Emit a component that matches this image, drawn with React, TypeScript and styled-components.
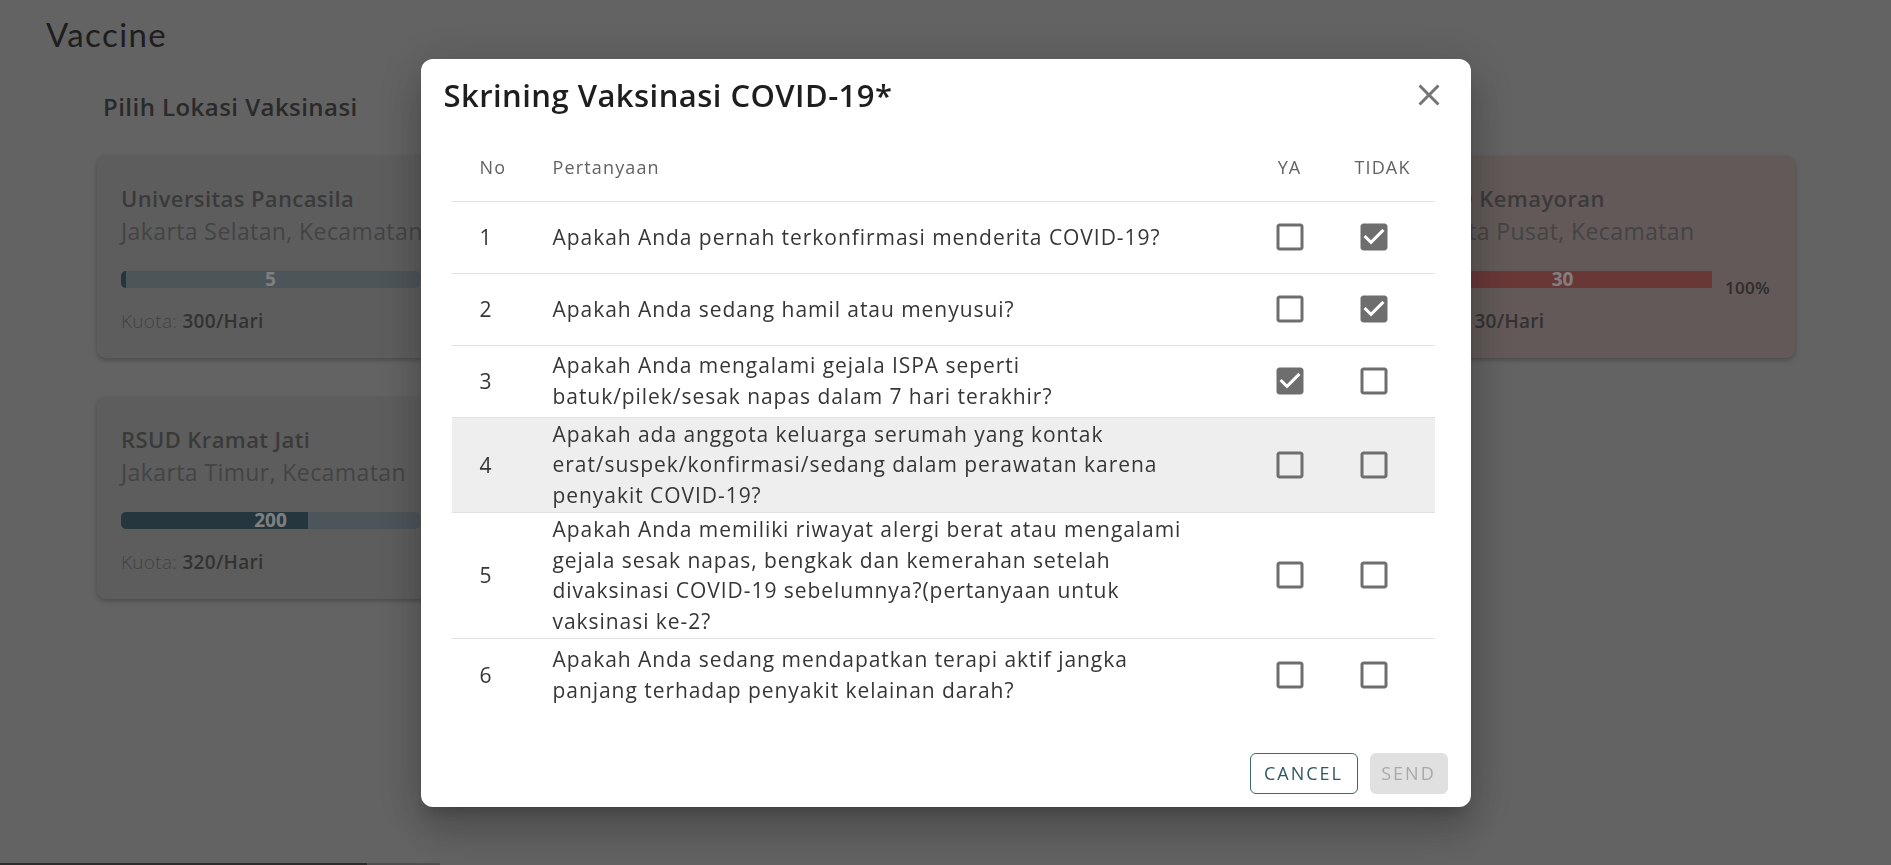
import React from 'react'
import styled, { createGlobalStyle } from 'styled-components'

const GlobalStyle = createGlobalStyle`
  html, body {
    margin: 0;
    padding: 0;
    background: #c6c6c7;
    font-family: 'Open Sans', 'Liberation Sans', sans-serif;
  }
  * {
    box-sizing: border-box;
  }
`

type Location = {
  name: string
  area: string
  used: number
  quota: number
  full?: boolean
}

type Question = {
  no: number
  lines: string[]
  answer?: 'ya' | 'tidak'
  hovered?: boolean
}

const locations: Location[] = [
  { name: 'Universitas Pancasila', area: 'Jakarta Selatan, Kecamatan', used: 5, quota: 300 },
  { name: 'RSUD Tarakan', area: 'Jakarta Pusat, Kecamatan', used: 48, quota: 250 },
  { name: 'RSUD Kemayoran', area: 'Jakarta Pusat, Kecamatan', used: 30, quota: 30, full: true },
  { name: 'RSUD Kramat Jati', area: 'Jakarta Timur, Kecamatan', used: 200, quota: 320 },
]

const questions: Question[] = [
  { no: 1, lines: ['Apakah Anda pernah terkonfirmasi menderita COVID-19?'], answer: 'tidak' },
  { no: 2, lines: ['Apakah Anda sedang hamil atau menyusui?'], answer: 'tidak' },
  {
    no: 3,
    lines: ['Apakah Anda mengalami gejala ISPA seperti', 'batuk/pilek/sesak napas dalam 7 hari terakhir?'],
    answer: 'ya',
  },
  {
    no: 4,
    lines: [
      'Apakah ada anggota keluarga serumah yang kontak',
      'erat/suspek/konfirmasi/sedang dalam perawatan karena',
      'penyakit COVID-19?',
    ],
    hovered: true,
  },
  {
    no: 5,
    lines: [
      'Apakah Anda memiliki riwayat alergi berat atau mengalami',
      'gejala sesak napas, bengkak dan kemerahan setelah',
      'divaksinasi COVID-19 sebelumnya?(pertanyaan untuk',
      'vaksinasi ke-2?',
    ],
  },
  {
    no: 6,
    lines: ['Apakah Anda sedang mendapatkan terapi aktif jangka', 'panjang terhadap penyakit kelainan darah?'],
  },
]

/* page behind the dialog */

const Page = styled.div`
  display: flex;
  flex-direction: column;
  min-height: 903px;
`

const Content = styled.main`
  flex: 1;
  padding: 14px 0 0 46px;
`

const AppTitle = styled.h1`
  margin: 0;
  font-family: 'Lato', sans-serif;
  font-weight: 400;
  font-size: 33px;
  line-height: 40px;
  letter-spacing: 1.4px;
  color: #3c3c3c;
`

const Section = styled.section`
  margin-top: 37px;
  padding-left: 51px;
`

const SectionTitle = styled.h2`
  margin: 0 0 33px 6px;
  font-size: 24px;
  line-height: 32px;
  font-weight: 600;
  letter-spacing: 0.45px;
  color: #545454;
`

const CardGrid = styled.div`
  display: grid;
  grid-template-columns: repeat(3, 406px);
  justify-content: space-between;
  row-gap: 39px;
  width: 1698px;
`

const Card = styled.div<{ $full?: boolean }>`
  height: 202px;
  padding: 28px 24px 0;
  border-radius: 9px;
  background: ${({ $full }) => ($full ? '#c6b2b2' : '#bbbbbb')};
  box-shadow: 0 2px 5px rgba(0, 0, 0, 0.25);
`

const CardName = styled.div`
  font-size: 22px;
  line-height: 28px;
  font-weight: 600;
  letter-spacing: 0.4px;
  color: #757575;
  white-space: nowrap;
`

const CardArea = styled.div`
  margin-top: 4px;
  font-size: 23px;
  line-height: 30px;
  font-weight: 400;
  letter-spacing: 0.4px;
  color: #888888;
  white-space: nowrap;
`

const BarRow = styled.div`
  display: flex;
  align-items: flex-end;
  gap: 13px;
  margin-top: 25px;
`

const Bar = styled.div<{ $full?: boolean }>`
  position: relative;
  flex: none;
  display: flex;
  width: 299px;
  height: 17px;
  border-radius: 5px;
  background: ${({ $full }) => ($full ? '#d46e6e' : '#98aab4')};
`

const BarFill = styled.div<{ $full?: boolean }>`
  height: 100%;
  border-radius: 5px 0 0 5px;
  background: ${({ $full }) => ($full ? '#d46e6e' : '#4c6c7c')};
`

const BarLabel = styled.span`
  position: absolute;
  inset: 0;
  display: flex;
  align-items: center;
  justify-content: center;
  font-size: 19px;
  line-height: 17px;
  font-weight: 700;
  color: #ffffff;
`

const Percent = styled.span`
  font-size: 17px;
  line-height: 18px;
  font-weight: 600;
  letter-spacing: 0.3px;
  color: #5a5a5a;
  margin-bottom: -9px;
`

const Quota = styled.div`
  margin-top: 20px;
  font-size: 19px;
  line-height: 26px;
  font-weight: 300;
  letter-spacing: 0.3px;
  color: #858585;

  b {
    font-weight: 600;
    color: #646464;
  }
`

const BottomNav = styled.nav`
  display: flex;
  height: 40px;
`

const NavTrack = styled.div<{ $width: number; $tone: 'dark' | 'light' }>`
  width: ${({ $width }) => $width}px;
  background: ${({ $tone }) => ($tone === 'dark' ? '#5a5a5a' : '#9c9c9c')};
`

/* dialog */

const Backdrop = styled.div`
  position: fixed;
  inset: 0;
  display: flex;
  align-items: center;
  justify-content: center;
  background: rgba(0, 0, 0, 0.5);
`

const Dialog = styled.div`
  display: flex;
  flex-direction: column;
  width: 1050px;
  height: 748px;
  padding: 12px 23px 13px;
  border-radius: 12px;
  background: #ffffff;
  box-shadow: 0 11px 15px -7px rgba(0, 0, 0, 0.2), 0 24px 38px 3px rgba(0, 0, 0, 0.14),
    0 9px 46px 8px rgba(0, 0, 0, 0.12);
`

const DialogHead = styled.div`
  display: flex;
  align-items: center;
  justify-content: space-between;
  height: 48px;
`

const DialogTitle = styled.h2`
  margin: 0;
  font-size: 31px;
  line-height: 48px;
  font-weight: 600;
  letter-spacing: 0.45px;
  color: #1e1e1e;
`

const CloseButton = styled.button`
  display: flex;
  padding: 0;
  margin-right: 1px;
  border: 0;
  background: none;
  color: #757575;
  cursor: pointer;
`

const Table = styled.div`
  margin: 13px 13px 0 8px;
`

const Row = styled.div<{ $head?: boolean; $hovered?: boolean; $last?: boolean }>`
  display: grid;
  grid-template-columns: 85px 1fr 84px 84px;
  align-items: center;
  min-height: ${({ $head }) => ($head ? '70px' : '72px')};
  padding-right: 19px;
  background: ${({ $hovered }) => ($hovered ? '#eeeeee' : 'transparent')};
  border-bottom: ${({ $last }) => ($last ? '0' : '1px solid #e2e2e2')};
`

const HeadCell = styled.div<{ $pad?: number; $center?: boolean }>`
  padding-left: ${({ $pad = 0 }) => $pad}px;
  padding-top: 2px;
  text-align: ${({ $center }) => ($center ? 'center' : 'left')};
  font-size: 18px;
  line-height: 26px;
  font-weight: 500;
  letter-spacing: 1.15px;
  color: #626262;
`

const NoCell = styled.div`
  padding-left: 28px;
  font-size: 21px;
  color: #363636;
`

const QuestionCell = styled.div`
  padding: 1px 0 1px 16px;
  font-size: 21px;
  line-height: 30.8px;
  letter-spacing: 0.95px;
  color: #363636;
`

const Line = styled.span`
  display: block;
  white-space: nowrap;
`

const CheckCell = styled.div`
  display: flex;
  justify-content: center;
  color: #6e6e6e;
`

const Actions = styled.div`
  display: flex;
  justify-content: flex-end;
  gap: 12px;
  margin-top: auto;
`

const Button = styled.button<{ $variant: 'outlined' | 'disabled' }>`
  height: 41px;
  padding: 0 10px;
  border-radius: 6px;
  font-family: inherit;
  font-size: 18px;
  letter-spacing: 2px;
  border: 1px solid ${({ $variant }) => ($variant === 'outlined' ? '#3c6570' : '#e0e0e0')};
  background: ${({ $variant }) => ($variant === 'outlined' ? '#ffffff' : '#e0e0e0')};
  color: ${({ $variant }) => ($variant === 'outlined' ? '#2f5865' : '#a9a9a9')};
  min-width: ${({ $variant }) => ($variant === 'outlined' ? '108px' : '78px')};
`

const CheckBox = ({ checked }: { checked?: boolean }) => (
  <svg width="36" height="36" viewBox="0 0 24 24" fill="currentColor">
    {checked ? (
      <path d="M19 3H5c-1.11 0-2 .9-2 2v14c0 1.1.89 2 2 2h14c1.11 0 2-.9 2-2V5c0-1.1-.89-2-2-2zm-9 14l-5-5 1.41-1.41L10 14.17l7.59-7.59L19 8l-9 9z" />
    ) : (
      <path d="M19 5v14H5V5h14m0-2H5c-1.1 0-2 .9-2 2v14c0 1.1.9 2 2 2h14c1.1 0 2-.9 2-2V5c0-1.1-.9-2-2-2z" />
    )}
  </svg>
)

const LocationCard = ({ loc }: { loc: Location }) => {
  const ratio = loc.used / loc.quota
  return (
    <Card $full={loc.full}>
      <CardName>{loc.name}</CardName>
      <CardArea>{loc.area}</CardArea>
      <BarRow>
        <Bar $full={loc.full}>
          <BarFill $full={loc.full} style={{ width: `${ratio * 100}%` }} />
          <BarLabel>{loc.used}</BarLabel>
        </Bar>
        <Percent>{Math.round(ratio * 100)}%</Percent>
      </BarRow>
      <Quota>
        Kuota: <b>{loc.quota}/Hari</b>
      </Quota>
    </Card>
  )
}

const App = () => {
  return (
    <>
      <GlobalStyle />
      <Page>
        <Content>
          <AppTitle>Vaccine</AppTitle>
          <Section>
            <SectionTitle>Pilih Lokasi Vaksinasi</SectionTitle>
            <CardGrid>
              {locations.map((loc) => (
                <LocationCard key={loc.name} loc={loc} />
              ))}
            </CardGrid>
          </Section>
        </Content>
        <BottomNav>
          <NavTrack $width={367} $tone="dark" />
          <NavTrack $width={73} $tone="light" />
        </BottomNav>
      </Page>
      <Backdrop>
        <Dialog>
          <DialogHead>
            <DialogTitle>Skrining Vaksinasi COVID-19*</DialogTitle>
            <CloseButton aria-label="close">
              <svg width="36" height="36" viewBox="0 0 24 24" fill="currentColor">
                <path d="M19 6.41L17.59 5 12 10.59 6.41 5 5 6.41 10.59 12 5 17.59 6.41 19 12 13.41 17.59 19 19 17.59 13.41 12z" />
              </svg>
            </CloseButton>
          </DialogHead>
          <Table>
            <Row $head>
              <HeadCell $pad={28}>No</HeadCell>
              <HeadCell $pad={16}>Pertanyaan</HeadCell>
              <HeadCell $center>YA</HeadCell>
              <HeadCell $center $pad={18}>
                TIDAK
              </HeadCell>
            </Row>
            {questions.map((q, i) => (
              <Row key={q.no} $hovered={q.hovered} $last={i === questions.length - 1}>
                <NoCell>{q.no}</NoCell>
                <QuestionCell>
                  {q.lines.map((l) => (
                    <Line key={l}>{l}</Line>
                  ))}
                </QuestionCell>
                <CheckCell>
                  <CheckBox checked={q.answer === 'ya'} />
                </CheckCell>
                <CheckCell>
                  <CheckBox checked={q.answer === 'tidak'} />
                </CheckCell>
              </Row>
            ))}
          </Table>
          <Actions>
            <Button $variant="outlined">CANCEL</Button>
            <Button $variant="disabled" disabled>
              SEND
            </Button>
          </Actions>
        </Dialog>
      </Backdrop>
    </>
  )
}

export default App
